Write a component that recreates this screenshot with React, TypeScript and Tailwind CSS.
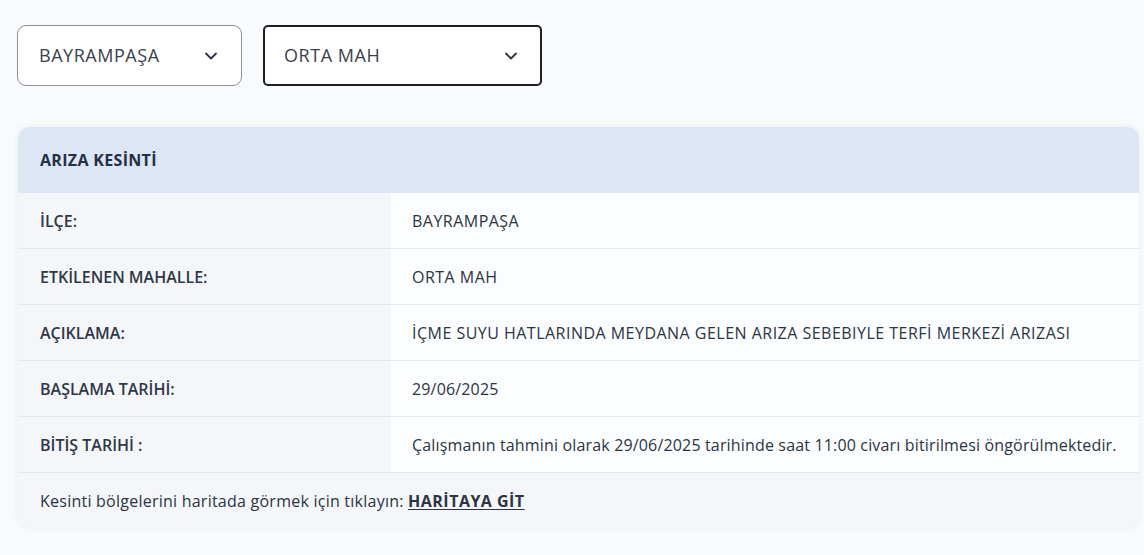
import React from 'react';
import { ChevronDown } from 'lucide-react';

const rows = [
  { label: 'İLÇE:', value: 'BAYRAMPAŞA', caps: true },
  { label: 'ETKİLENEN MAHALLE:', value: 'ORTA MAH', caps: true },
  {
    label: 'AÇIKLAMA:',
    value: 'İÇME SUYU HATLARINDA MEYDANA GELEN ARIZA SEBEBIYLE TERFİ MERKEZİ ARIZASI',
    caps: true,
  },
  { label: 'BAŞLAMA TARİHİ:', value: '29/06/2025', caps: false },
  {
    label: 'BİTİŞ TARİHİ :',
    value: 'Çalışmanın tahmini olarak 29/06/2025 tarihinde saat 11:00 civarı bitirilmesi öngörülmektedir.',
    caps: false,
  },
];

const App: React.FC = () => {
  return (
    <div
      className="min-h-screen bg-[#f9fafc] pl-[17px] pr-[5px] pt-[25px] text-[#2b3443]"
      style={{ fontFamily: '"Open Sans", Lato, sans-serif' }}
    >
      {/* Dropdowns */}
      <div className="flex gap-[21px]">
        <button className="flex h-[61px] w-[225px] items-center justify-between rounded-[9px] border border-[#8c9199] bg-white pl-[21px] pr-[20px] text-[18px] tracking-[0.03em] text-[#3a414c]">
          <span>BAYRAMPAŞA</span>
          <ChevronDown className="h-5 w-5 text-[#2b3443]" strokeWidth={2.2} />
        </button>
        <button className="flex h-[61px] w-[279px] items-center justify-between rounded-[5px] border-2 border-[#1c1f24] bg-white pl-[19px] pr-[19px] text-[18px] tracking-[0.03em] text-[#3a414c]">
          <span>ORTA MAH</span>
          <ChevronDown className="h-5 w-5 text-[#2b3443]" strokeWidth={2.2} />
        </button>
      </div>

      {/* Outage card */}
      <div className="ml-px mt-[41px] overflow-hidden rounded-[12px] bg-[#f4f6f9] shadow-[0_0_6px_rgba(40,60,90,0.08)]">
        <div className="flex h-[66px] items-center bg-[#dce6f5] px-[22px] text-[16px] font-bold tracking-[0.02em] text-[#253047]">
          ARIZA KESİNTİ
        </div>
        {rows.map((row) => (
          <div key={row.label} className="flex h-[56px] border-b border-[#e4e8ee]">
            <div className="flex w-[373px] shrink-0 items-center bg-[#f4f6f9] px-[22px] text-[16px] font-semibold text-[#2f3846]">
              {row.label}
            </div>
            <div
              className={
                row.caps
                  ? 'flex flex-1 items-center bg-[#fcfdfe] px-[21px] text-[16px] tracking-[0.03em] text-[#2b3443]'
                  : 'flex flex-1 items-center bg-[#fcfdfe] px-[21px] text-[16px] tracking-[0.01em] text-[#2b3443]'
              }
            >
              {row.value}
            </div>
          </div>
        ))}
        <div className="flex h-[55px] items-center bg-[#f4f6f9] px-[22px] text-[16px] tracking-[0.015em] text-[#2b3443]">
          <span>Kesinti bölgelerini haritada görmek için tıklayın:&nbsp;</span>
          <a href="#" className="font-bold tracking-[0.03em] underline underline-offset-2">
            HARİTAYA GİT
          </a>
        </div>
      </div>
    </div>
  );
};

export default App;
